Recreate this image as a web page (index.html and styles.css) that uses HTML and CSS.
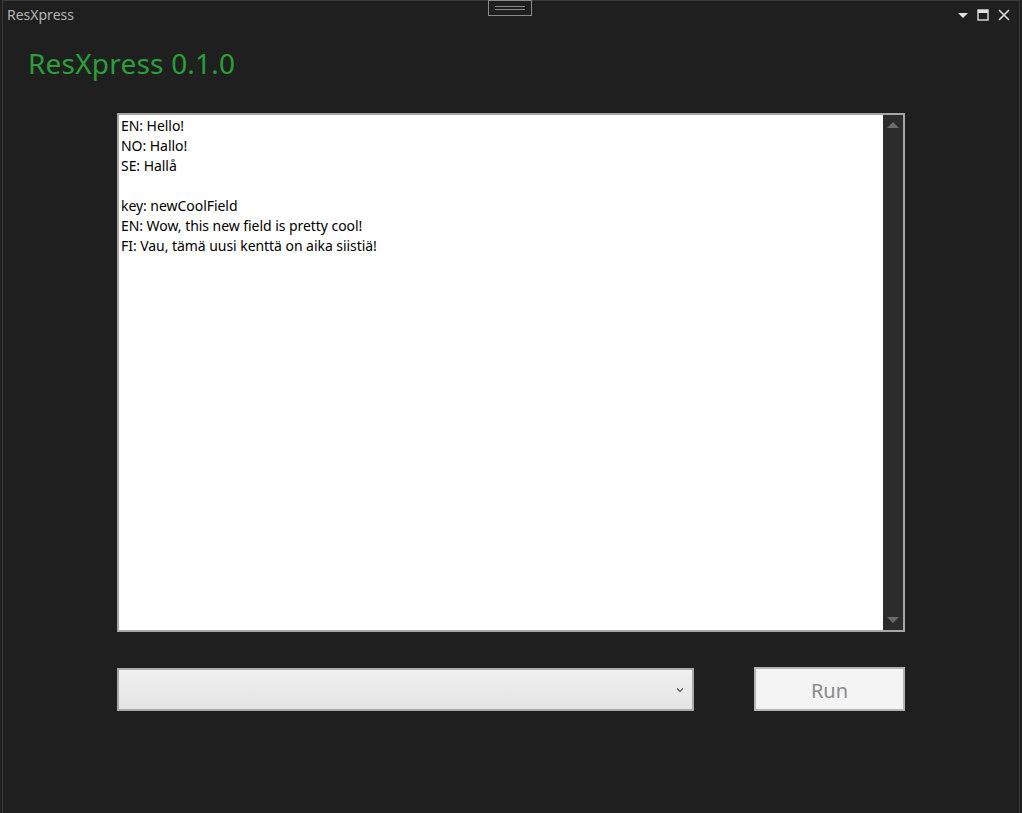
FILE: index.html
```html
<!DOCTYPE html>
<html>
<head>
<meta charset="utf-8">
<link rel="stylesheet" href="styles.css">
</head>
<body>
<div class="window">
  <div class="titlebar">
    <span class="title">ResXpress</span>
    <div class="grip"><span></span><span></span></div>
    <div class="controls">
      <svg width="12" height="12" viewBox="0 0 12 12"><polygon points="1,4 11,4 6,9" fill="#e0e0e0"/></svg>
      <svg width="12" height="12" viewBox="0 0 12 12"><rect x="1" y="1" width="10" height="10" fill="none" stroke="#e0e0e0" stroke-width="1.4"/><rect x="1" y="1" width="10" height="3" fill="#e0e0e0"/></svg>
      <svg width="14" height="14" viewBox="0 0 14 14"><path d="M2 2 L12 12 M12 2 L2 12" stroke="#e0e0e0" stroke-width="1.6"/></svg>
    </div>
  </div>
  <h1 class="heading">ResXpress 0.1.0</h1>
  <div class="content">
    <div class="editor">
      <div class="text">EN: Hello!
NO: Hallo!
SE: Hallå

key: newCoolField
EN: Wow, this new field is pretty cool!
FI: Vau, tämä uusi kenttä on aika siistiä!</div>
      <div class="scrollbar">
        <svg width="20" height="16" viewBox="0 0 20 16"><polygon points="4,11 16,11 10,5" fill="#6b6b6b"/></svg>
        <svg width="20" height="16" viewBox="0 0 20 16"><polygon points="4,5 16,5 10,11" fill="#6b6b6b"/></svg>
      </div>
    </div>
    <div class="bottom">
      <div class="combo">
        <svg width="10" height="8" viewBox="0 0 10 8"><path d="M2 2.5 L5 5.5 L8 2.5" fill="none" stroke="#555" stroke-width="1.2"/></svg>
      </div>
      <button class="run">Run</button>
    </div>
  </div>
</div>
</body>
</html>
```

FILE: styles.css
```css
html, body {
  margin: 0;
  padding: 0;
  background: #1f1f1f;
}
.window {
  height: 813px;
  box-sizing: border-box;
  border-left: 1px solid #3a3a3a;
  border-right: 1px solid #3a3a3a;
  border-top: 1px solid #3a3a3a;
  margin-left: 2px;
  width: 1018px;
  background: #1f1f1f;
  font-family: "Noto Sans", sans-serif;
  position: relative;
}
.titlebar {
  height: 28px;
  display: flex;
  align-items: flex-start;
  position: relative;
}
.title {
  color: #b4b4b4;
  font-size: 14px;
  line-height: 14px;
  margin-left: 4px;
  margin-top: 7px;
}
.grip {
  position: absolute;
  left: 485px;
  top: -1px;
  width: 42px;
  height: 14px;
  border: 1px solid #8a8a8a;
  display: flex;
  flex-direction: column;
  align-items: center;
  justify-content: center;
  gap: 2px;
}
.grip span {
  display: block;
  width: 30px;
  height: 1px;
  background: #8a8a8a;
}
.controls {
  margin-left: auto;
  margin-right: 8px;
  margin-top: 7px;
  display: flex;
  align-items: center;
  gap: 8px;
}
.heading {
  margin: 16px 0 0 25px;
  color: #28a03a;
  font-weight: normal;
  font-size: 28px;
  line-height: 36px;
  letter-spacing: 0.2px;
}
.content {
  margin: 32px 0 0 114px;
  width: 788px;
}
.editor {
  height: 519px;
  box-sizing: border-box;
  border: 2px solid #a6a6a6;
  background: #fff;
  display: flex;
}
.text {
  flex: 1;
  white-space: pre;
  font-size: 14px;
  line-height: 20px;
  color: #000;
  padding: 1px 0 0 2px;
  letter-spacing: -0.05px;
}
.scrollbar {
  width: 20px;
  background: #2c2c2c;
  display: flex;
  flex-direction: column;
  justify-content: space-between;
  padding: 2px 0;
}
.bottom {
  margin-top: 35px;
  display: flex;
  align-items: flex-start;
  justify-content: space-between;
}
.combo {
  width: 577px;
  height: 43px;
  margin-top: 1px;
  box-sizing: border-box;
  border: 2px solid #a9a9a9;
  background: linear-gradient(#f0f0f0, #e4e4e4);
  display: flex;
  align-items: center;
  justify-content: flex-end;
  padding-right: 7px;
}
.run {
  width: 151px;
  height: 44px;
  box-sizing: border-box;
  border: 2px solid #b4b4b4;
  background: #f4f4f4;
  color: #8a8a8a;
  font-size: 20px;
  font-family: "Noto Sans", sans-serif;
  padding: 3px 0 0 0;
  line-height: 37px;
}
```
